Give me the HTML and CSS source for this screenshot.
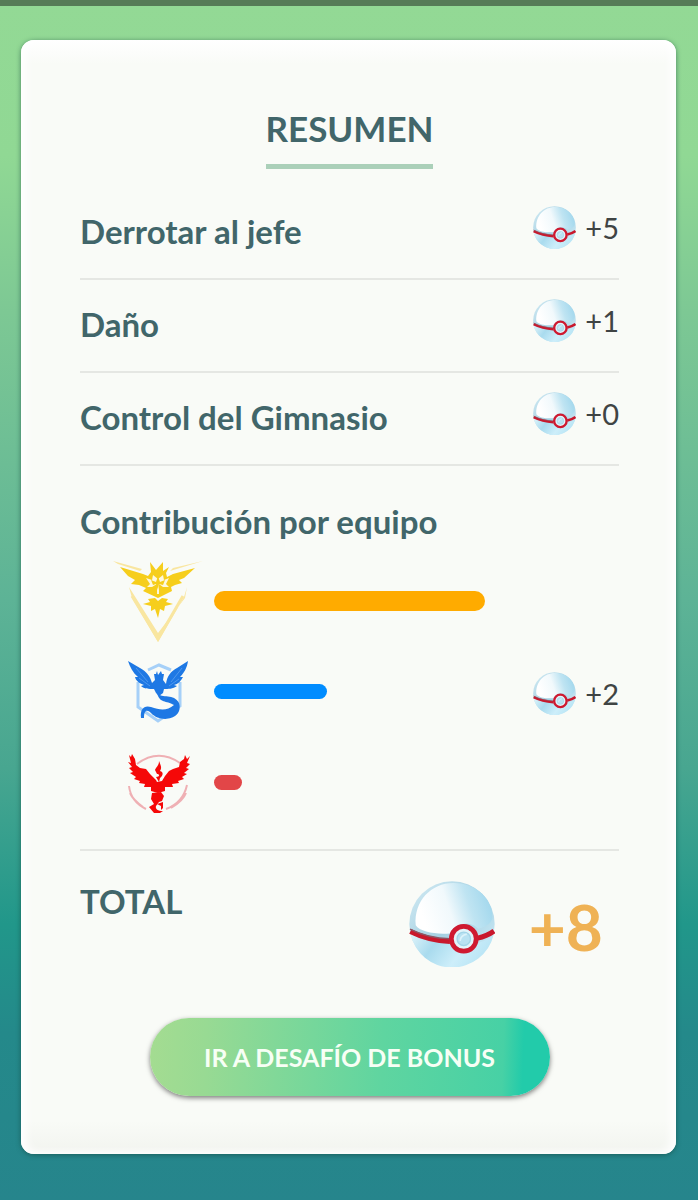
FILE: index.html
```html
<!DOCTYPE html>
<html lang="es">
<head>
    <meta charset="UTF-8">
    <meta name="viewport" content="width=device-width, initial-scale=1.0">
    <title>Resumen</title>
    <link rel="stylesheet" href="styles.css">
</head>
<body>
    <!-- ball shared by every reward -->
    <svg class="defs" width="0" height="0" aria-hidden="true">
        <defs>
            <linearGradient id="base" x1="0" y1="0" x2="1" y2="1">
                <stop offset="0" stop-color="#d5ecf4"/>
                <stop offset="0.5" stop-color="#a4d0e2"/>
                <stop offset="1" stop-color="#d5f1fb"/>
            </linearGradient>
            <linearGradient id="shine" x1="0.1" y1="0.7" x2="1" y2="0.5">
                <stop offset="0" stop-color="#ffffff"/>
                <stop offset="0.4" stop-color="#f1f9fc"/>
                <stop offset="0.7" stop-color="#bfe4f2"/>
                <stop offset="1" stop-color="#a3d8ed"/>
            </linearGradient>
            <linearGradient id="under" x1="0" y1="0" x2="1" y2="0.3">
                <stop offset="0" stop-color="#e2f5fb"/>
                <stop offset="0.35" stop-color="#a9dbee"/>
                <stop offset="0.7" stop-color="#cdeefa"/>
                <stop offset="1" stop-color="#b9e5f5"/>
            </linearGradient>
        </defs>
        <symbol id="ball" viewBox="0 0 256 256">
            <circle cx="128" cy="128" r="127" fill="url(#base)"/>
            <path d="M20 132C14 60 66 6 132 6C204 6 252 58 248 112C242 130 222 138 206 142C190 122 140 118 122 156C82 160 32 152 20 132Z" fill="url(#shine)"/>
            <path d="M4 156Q60 186 122 188Q134 216 163 216Q194 214 207 184Q236 176 252 160A127 127 0 0 1 4 156Z" fill="url(#under)"/>
            <path d="M4 150Q56 176 122 180M204 170Q232 164 253 149" fill="none" stroke="#c9182c" stroke-width="15"/>
            <path d="M3 143Q56 170 122 172" fill="none" stroke="#8d5563" stroke-width="4"/>
            <circle cx="163" cy="172" r="37" fill="#e2f4fa" stroke="#cf1930" stroke-width="14"/>
            <circle cx="163" cy="172" r="20" fill="#b9e2f2" stroke="#a3d5e8" stroke-width="4"/>
            <path d="M152 178Q154 162 172 158" fill="none" stroke="#dcf3fb" stroke-width="5"/>
        </symbol>
    </svg>

    <main class="card">
        <h1>RESUMEN</h1>

        <div class="row">
            <h2>Derrotar al jefe</h2>
            <span class="reward"><svg class="ball"><use href="#ball"/></svg>+5</span>
        </div>
        <div class="row">
            <h2>Daño</h2>
            <span class="reward"><svg class="ball"><use href="#ball"/></svg>+1</span>
        </div>
        <div class="row">
            <h2>Control del Gimnasio</h2>
            <span class="reward"><svg class="ball"><use href="#ball"/></svg>+0</span>
        </div>

        <section class="teams">
            <h2>Contribución por equipo</h2>
            <div class="team">
                <svg class="emblem" viewBox="0 0 90 90">
                    <path d="M0 5L29 13L27 15L5 8ZM90 5L57 15L60 12ZM16 31L45 77L72 42L74 31L71 41L45 86L19 42Z" fill="#f9e6a0"/>
                    <path d="M19 40L45 83L70 40" fill="none" stroke="#f9e6a0" stroke-width="3"/>
                    <path d="M7 11L30 18L35 20L38 16L37 6L43 14L50 6L50 15L56 11L53 17L54 21L60 18L82 12L71 22L66 24L69 27L62 29L58 31L59 35L45 42L30 35L33 32L26 29L18 28L22 24L15 20Z" fill="#f6ce1c"/>
                    <path d="M33 22L39 24L40 19L45 23L50 19L51 24L56 22L53 28L56 31L50 31L46 28L46 38L44 38L44 28L39 31L34 31L37 28Z" fill="#fdf8df"/>
                    <path d="M38 24L43 26L45 20L47 26L52 24L50 29L46 28L45 34L43 28L40 29Z" fill="#f6ce1c"/>
                    <path d="M35 43L42 42L45 45L49 42L55 43L53 46L60 48L52 50L51 55L47 53L45 62L42 53L38 55L38 50L30 48L37 46Z" fill="#f6ce1c"/>
                </svg>
                <span class="bar instinct" style="width: 53.5%"></span>
            </div>
            <div class="team">
                <svg class="emblem" viewBox="0 -2 90 90">
                    <path d="M25 33L25 58L45 72L67 57L67 33M35 21L46 16L58 21" fill="none" stroke="#a6d0f8" stroke-width="3"/>
                    <path d="M15 12L27 19C34 23 37 27 39 34L42 31L41 25L43 25L44 22L45 26L48 22L49 25L51 25L50 31L53 35C54 27 58 22 64 19L75 12C74 19 71 24 67 28L70 28C68 32 65 35 61 36L64 37C60 40 55 40 51 40L50 44L46 47L43 44L41 40C36 40 31 40 28 37L31 36C26 34 23 32 22 28L25 28C20 24 17 18 15 12Z" fill="#1e78e4"/>
                    <path d="M23 19L35 33M26 29L37 37M69 19L58 33M66 30L56 37" stroke="#4e98ee" stroke-width="1"/>
                    <path d="M44 44C49 50 61 44 66 54C71 70 48 75 38 64C34 60 31 61 31 69L28 69C27 60 31 56 38 58C47 61 54 62 61 56C53 51 47 55 44 44Z" fill="#1e78e4"/>
                </svg>
                <span class="bar mystic" style="width: 22.3%"></span>
                <span class="reward"><svg class="ball"><use href="#ball"/></svg>+2</span>
            </div>
            <div class="team">
                <svg class="emblem" viewBox="0 -3 90 90">
                    <path d="M24 23Q45 7 67 22M16 45Q18 61 33 68M74 44Q70 62 53 68M17 52Q20 59 30 66M73 52Q70 60 58 67" fill="none" stroke="#efb0b4" stroke-width="2"/>
                    <path d="M16 14L18 16L19 13L22 18L23 24L27 27L33 28L37 33L40 36L43 39L44 41L49 40L52 35L56 30L60 28L66 26L67 21L71 18L72 14L74 18L77 15L74 22L77 23L73 27L76 28L71 32L74 33L69 36L71 38L65 40L66 42L59 43L60 46L52 46L52 50L45 52L38 50L38 46L31 46L32 43L26 42L27 40L21 38L23 36L17 32L20 31L16 27L19 26L15 21L18 22Z" fill="#f50808"/>
                    <path d="M46 20C48 25 49 27 47 30C51 31 50 35 47 37L46 41L43 36C47 36 47 33 44 33L42 29C43 26 46 25 46 20Z" fill="#f50808"/>
                    <path d="M39 52L48 51L51 55L49 60L46 61L43 65C42 68 45 70 50 70L47 72L41 72L36 66L41 63L38 58Z" fill="#f50808"/>
                    <path d="M44 63L50 61L50 67L48 69L48 65Z" fill="#f50808"/>
                </svg>
                <span class="bar valor" style="width: 5.6%"></span>
            </div>
        </section>

        <div class="total">
            <h2>TOTAL</h2>
            <svg class="ball big"><use href="#ball"/></svg>
            <strong>+8</strong>
        </div>

        <button type="button">IR A DESAFÍO DE BONUS</button>
    </main>
</body>
</html>
```
FILE: styles.css
```css
* {
    box-sizing: border-box;
}

body {
    margin: 0;
    min-height: 100vh;
    padding: 34px 22px 46px 21px;
    border-top: 6px solid #567b57;
    font-family: Lato, sans-serif;
    color: #41666a;
    background: linear-gradient(#93d995 0%, #90d894 13%, #7dc894 26%, #5db396 50%, #48a690 64%, #21978a 77%, #24898a 86%, #26858c 100%);
}

.defs {
    position: absolute;
}

.card {
    display: flex;
    flex-direction: column;
    padding: 64px 57px 58px 59px;
    border-radius: 13px;
    background: linear-gradient(#ffffff 0, #f9fbf7 24px, #f9fbf7 97%, #f2f4ef 100%);
    box-shadow: 0 1px 5px rgba(20, 70, 60, 0.6), inset 5px 0 10px #ffffff, inset -5px 0 10px #ffffff;
}

h1, h2 {
    margin: 0;
    font-weight: 700;
}

h1 {
    align-self: center;
    padding-bottom: 12px;
    border-bottom: 5px solid #abd0b9;
    font-size: 35px;
    line-height: 48px;
}

h2 {
    font-size: 33px;
    line-height: 40px;
}

.row {
    display: flex;
    justify-content: space-between;
    align-items: flex-start;
    height: 93px;
    padding-top: 24px;
    border-bottom: 2px solid #e5e7e3;
}

h1 + .row {
    height: 111px;
    padding-top: 42px;
}

.reward {
    display: flex;
    align-items: center;
    gap: 9px;
    margin-top: -5px;
    font-size: 29px;
    line-height: 40px;
    color: #3f4444;
}

.ball {
    width: 43px;
    height: 43px;
}

.teams {
    padding: 35px 0 21px;
    border-bottom: 2px solid #e5e7e3;
}

.teams h2 {
    margin-bottom: 14px;
}

.team {
    display: flex;
    align-items: center;
    height: 91px;
    padding-left: 33px;
}

.emblem {
    width: 90px;
    height: 90px;
    flex-shrink: 0;
    margin-right: 11px;
}

.team .reward {
    margin: 4px 0 0 auto;
}

.bar {
    height: 15px;
    border-radius: 10px;
}

.instinct {
    height: 20px;
    background: #ffab00;
}

.mystic {
    background: #008cff;
}

.valor {
    background: #e24648;
}

.total {
    display: flex;
    align-items: flex-start;
    padding: 30px 16px 0 0;
}

.big {
    width: 86px;
    height: 86px;
    margin: 0 34px 0 auto;
}

strong {
    font-size: 64px;
    line-height: 92px;
    color: #efb255;
}

button {
    align-self: center;
    width: 400px;
    max-width: 100%;
    height: 78px;
    margin-top: 45px;
    border: none;
    border-radius: 39px;
    font-family: inherit;
    font-size: 25px;
    font-weight: 700;
    color: #f7fff5;
    background: linear-gradient(92deg, #a4dc91 0%, #98da93 14%, #5fd5a0 58%, #47d1a5 88%, #22cbaa 93%, #22cbaa 100%);
    box-shadow: 0 2px 5px rgba(0, 0, 0, 0.5);
    cursor: pointer;
}
```
